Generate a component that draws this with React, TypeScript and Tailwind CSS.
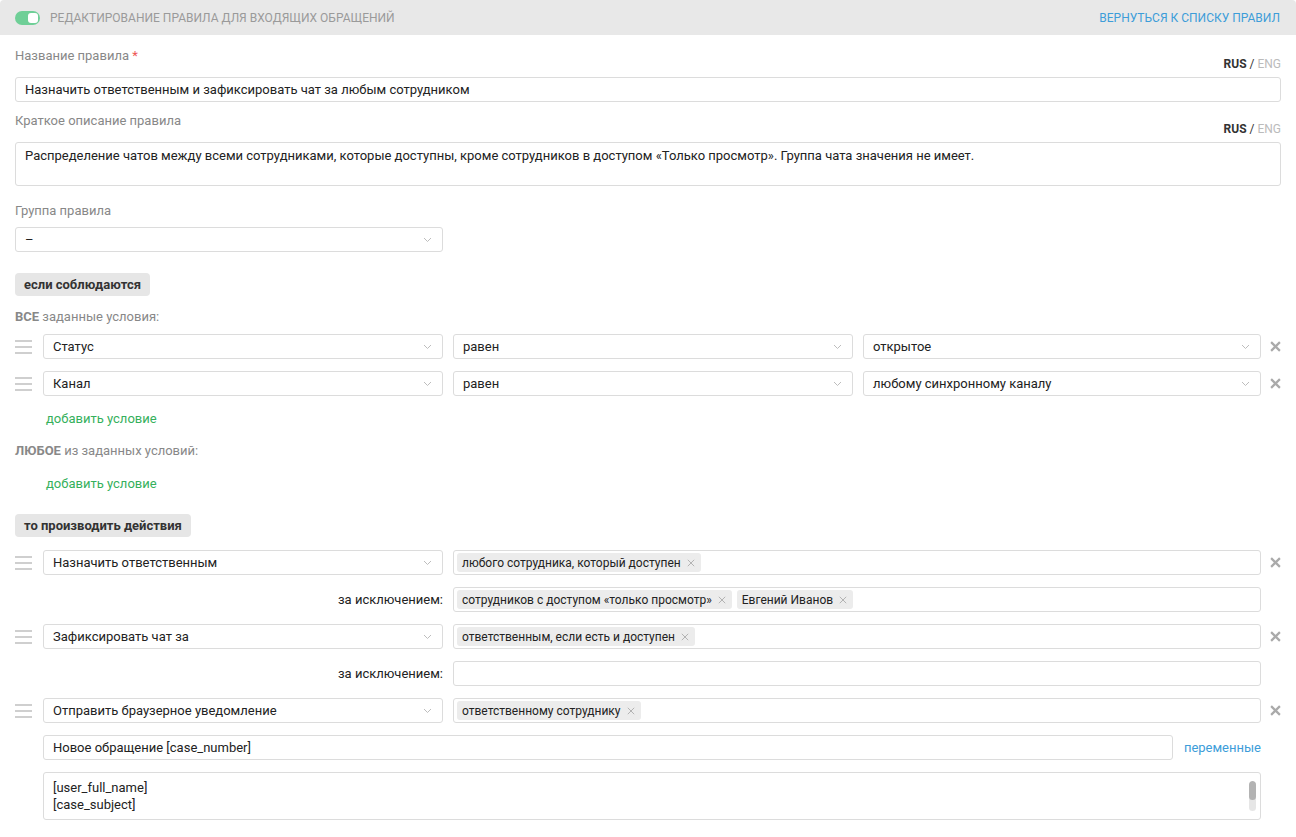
import { ReactNode } from "react";

const font = { fontFamily: "Roboto, 'Liberation Sans', sans-serif" };

function Chevron() {
  return (
    <svg width="9" height="6" viewBox="0 0 9 6" className="shrink-0">
      <path d="M1 1l3.5 3.5L8 1" fill="none" stroke="#bdbdbd" strokeWidth="1" />
    </svg>
  );
}

function Cross({ size = 11, color = "#aaa", width = 2 }: { size?: number; color?: string; width?: number }) {
  return (
    <svg width={size} height={size} viewBox="0 0 10 10" className="shrink-0">
      <path d="M1 1l8 8M9 1l-8 8" stroke={color} strokeWidth={width} />
    </svg>
  );
}

function Handle() {
  return (
    <div className="flex w-[17px] shrink-0 flex-col gap-[4px]">
      <span className="h-[2px] bg-[#cfcfcf]" />
      <span className="h-[2px] bg-[#cfcfcf]" />
      <span className="h-[2px] bg-[#cfcfcf]" />
    </div>
  );
}

function Select({ value, className = "" }: { value: string; className?: string }) {
  return (
    <div
      className={`flex h-[25px] items-center justify-between rounded-[3px] border border-[#dcdcdc] bg-white pl-[9px] pr-[10px] text-[13px] text-[#222] ${className}`}
    >
      <span>{value}</span>
      <Chevron />
    </div>
  );
}

function Tag({ label }: { label: string }) {
  return (
    <span className="flex h-[19px] items-center gap-[6px] rounded-[3px] bg-[#ececec] pl-[5px] pr-[6px] text-[12px] text-[#222]">
      {label}
      <Cross size={8} color="#b0b0b0" width={1.2} />
    </span>
  );
}

function TagBox({ tags }: { tags: string[] }) {
  return (
    <div className="flex h-[25px] flex-1 items-center gap-[5px] rounded-[3px] border border-[#dcdcdc] bg-white px-[3px]">
      {tags.map((t) => (
        <Tag key={t} label={t} />
      ))}
    </div>
  );
}

function Row({ children }: { children: ReactNode }) {
  return (
    <div className="flex items-center">
      <Handle />
      <div className="ml-[11px] flex flex-1 items-center gap-[10px]">{children}</div>
      <div className="flex w-[20px] justify-end">
        <Cross />
      </div>
    </div>
  );
}

function ExceptRow({ tags }: { tags: string[] }) {
  return (
    <div className="flex items-center pr-[20px]">
      <span className="w-[428px] text-right text-[13px] text-[#222]">за исключением:</span>
      <div className="ml-[10px] flex flex-1">
        <TagBox tags={tags} />
      </div>
    </div>
  );
}

function Lang() {
  return (
    <div className="text-[12px] leading-[14px]">
      <b className="font-bold text-[#333]">RUS</b>
      <span className="text-[#333]"> / </span>
      <span className="text-[#bbb]">ENG</span>
    </div>
  );
}

function FieldHead({ children, className = "" }: { children: ReactNode; className?: string }) {
  return (
    <div className={`flex h-[23px] items-start justify-between ${className}`}>
      <label className="text-[13px] leading-[16px] text-[#888]">{children}</label>
      <div className="self-end">
        <Lang />
      </div>
    </div>
  );
}

function Badge({ children }: { children: ReactNode }) {
  return (
    <span className="inline-flex h-[23px] items-center rounded-[4px] bg-[#e6e6e6] px-[9px] text-[13px] font-bold text-[#333]">
      {children}
    </span>
  );
}

function AddLink({ className = "" }: { className?: string }) {
  return <div className={`pl-[31px] text-[13px] leading-[16px] text-[#35b05c] ${className}`}>добавить условие</div>;
}

export default function App() {
  return (
    <div className="min-h-[837px] bg-white" style={font}>
      <header className="flex h-[35px] items-center justify-between rounded-t-[4px] bg-[#e8e8e8] pl-[15px] pr-[16px]">
        <div className="flex items-center gap-[10px]">
          <span className="flex h-[14px] w-[25px] items-center justify-end rounded-full bg-[#6fcf97] pr-[2px]">
            <span className="h-[10px] w-[10px] rounded-[3px] bg-white" />
          </span>
          <span className="text-[12px] uppercase text-[#9a9a9a]">Редактирование правила для входящих обращений</span>
        </div>
        <span className="text-[12px] uppercase text-[#3d9dd9]">Вернуться к списку правил</span>
      </header>

      <main className="flex flex-col px-[15px]">
        <FieldHead className="mt-[13px]">
          Название правила <span className="text-[#e55]">*</span>
        </FieldHead>
        <div className="mt-[6px] flex h-[25px] items-center rounded-[3px] border border-[#dcdcdc] px-[9px] text-[13px] text-[#222]">
          Назначить ответственным и зафиксировать чат за любым сотрудником
        </div>

        <FieldHead className="mt-[11px]">Краткое описание правила</FieldHead>
        <div className="mt-[6px] h-[44px] rounded-[3px] border border-[#dcdcdc] px-[9px] pt-[3px] text-[13px] text-[#222]">
          Распределение чатов между всеми сотрудниками, которые доступны, кроме сотрудников в доступом «Только просмотр». Группа чата значения не имеет.
        </div>

        <label className="mt-[17px] text-[13px] leading-[16px] text-[#888]">Группа правила</label>
        <Select value="–" className="mt-[8px] w-[428px]" />

        <div className="mt-[21px] flex">
          <Badge>если соблюдаются</Badge>
        </div>

        <div className="mt-[13px] text-[13px] leading-[16px] text-[#888]">
          <b className="font-bold">ВСЕ</b> заданные условия:
        </div>

        <div className="mt-[9px] flex flex-col gap-[12px]">
          <Row>
            <Select value="Статус" className="w-[400px]" />
            <Select value="равен" className="w-[400px]" />
            <Select value="открытое" className="flex-1" />
          </Row>
          <Row>
            <Select value="Канал" className="w-[400px]" />
            <Select value="равен" className="w-[400px]" />
            <Select value="любому синхронному каналу" className="flex-1" />
          </Row>
        </div>

        <AddLink className="mt-[15px]" />

        <div className="mt-[16px] text-[13px] leading-[16px] text-[#888]">
          <b className="font-bold">ЛЮБОЕ</b> из заданных условий:
        </div>

        <AddLink className="mt-[17px]" />

        <div className="mt-[22px] flex">
          <Badge>то производить действия</Badge>
        </div>

        <div className="mt-[13px] flex flex-col gap-[12px]">
          <Row>
            <Select value="Назначить ответственным" className="w-[400px]" />
            <TagBox tags={["любого сотрудника, который доступен"]} />
          </Row>
          <ExceptRow tags={["сотрудников с доступом «только просмотр»", "Евгений Иванов"]} />
          <Row>
            <Select value="Зафиксировать чат за" className="w-[400px]" />
            <TagBox tags={["ответственным, если есть и доступен"]} />
          </Row>
          <ExceptRow tags={[]} />
          <Row>
            <Select value="Отправить браузерное уведомление" className="w-[400px]" />
            <TagBox tags={["ответственному сотруднику"]} />
          </Row>
          <div className="flex items-center pl-[28px] pr-[20px]">
            <div className="flex h-[25px] flex-1 items-center rounded-[3px] border border-[#dcdcdc] px-[9px] text-[13px] text-[#222]">
              Новое обращение [case_number]
            </div>
            <span className="ml-[11px] text-[13px] text-[#3d9dd9]">переменные</span>
          </div>
          <div className="flex pl-[28px] pr-[20px]">
            <div className="flex h-[48px] flex-1 justify-between rounded-[3px] border border-[#dcdcdc] pl-[9px] pr-[4px] pt-[6px] text-[13px] leading-[17px] text-[#222]">
              <div>
                [user_full_name]
                <br />
                [case_subject]
              </div>
              <div className="mt-[2px] flex h-[30px] w-[7px] flex-col overflow-hidden rounded-full bg-[#e6e6e6]">
                <span className="h-[19px] rounded-full bg-[#b3b3b3]" />
              </div>
            </div>
          </div>
        </div>
      </main>
    </div>
  );
}
